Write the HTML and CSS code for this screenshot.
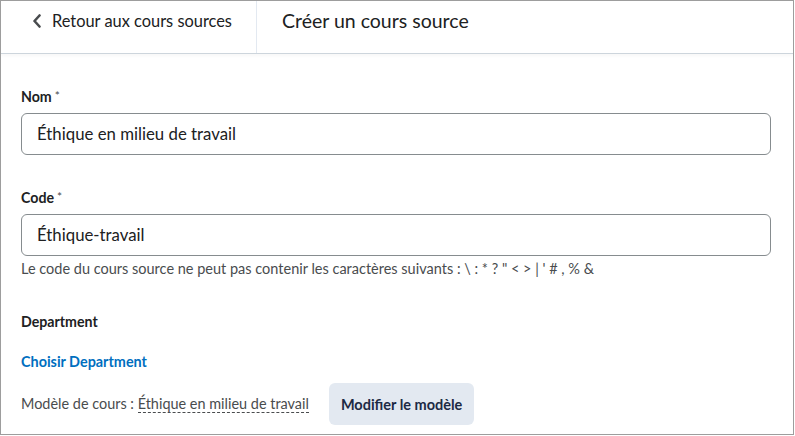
FILE: index.html
```html
<!DOCTYPE html>
<html lang="fr">
<head>
<meta charset="utf-8">
<title>Créer un cours source</title>
<link rel="stylesheet" href="styles.css">
</head>
<body>
<div class="frame">
  <header class="topbar">
    <a class="back" href="#">
      <svg class="chev" width="10" height="14" viewBox="0 0 10 14" aria-hidden="true"><path d="M7.5 1.5 L2.5 7 L7.5 12.5" fill="none" stroke="#494c4e" stroke-width="2.6" stroke-linecap="round" stroke-linejoin="round"/></svg>
      <span>Retour aux cours sources</span>
    </a>
    <h1 class="title">Créer un cours source</h1>
  </header>
  <main class="content">
    <div class="field">
      <label class="label">Nom<span class="req">*</span></label>
      <div class="input">Éthique en milieu de travail</div>
    </div>
    <div class="field field-help">
      <label class="label">Code<span class="req">*</span></label>
      <div class="input">Éthique-travail</div>
      <p class="help">Le code du cours source ne peut pas contenir les caractères suivants : \ : * ? " &lt; &gt; | ' # , % &amp;</p>
    </div>
    <div class="field field-dept">
      <div class="label">Department</div>
      <a class="link" href="#">Choisir Department</a>
    </div>
    <div class="template-row">
      <span class="template-text">Modèle de cours : <span class="dashed">Éthique en milieu de travail</span></span>
      <button class="btn" type="button">Modifier le modèle</button>
    </div>
  </main>
</div>
</body>
</html>
```

FILE: styles.css
```css
* { box-sizing: border-box; }
html, body { margin: 0; padding: 0; background: #fff; }
body {
  font-family: Lato, "Noto Sans", sans-serif;
  color: #202122;
}
.frame {
  width: 794px;
  height: 435px;
  border: 1px solid #9d9d9d;
  overflow: hidden;
  background: #fff;
}
.topbar {
  display: flex;
  height: 53px;
  border-bottom: 1px solid #cdd5dc;
  box-shadow: 0 2px 3px rgba(0, 0, 0, 0.03);
}
.back {
  display: flex;
  align-items: center;
  gap: 10px;
  width: 256px;
  height: 52px;
  padding: 0 0 12px 31px;
  border-right: 1px solid #e3e9f1;
  color: #202122;
  text-decoration: none;
  font-size: 16.4px;
  line-height: 24px;
}
.chev { display: block; flex: none; }
.title {
  margin: 0;
  padding: 5px 0 0 25px;
  font-size: 19.5px;
  font-weight: 400;
  line-height: 30px;
  color: #202122;
}
.content {
  padding: 32px 22px 0 20px;
}
.field { margin-bottom: 32px; }
.field-help { margin-bottom: 33px; }
.label {
  display: block;
  font-size: 14.2px;
  font-weight: 700;
  line-height: 20px;
  color: #202122;
  margin-bottom: 6px;
}
.req {
  font-weight: 400;
  font-size: 12px;
  color: #494c4e;
  margin-left: 3px;
  vertical-align: 2px;
}
.input {
  height: 42px;
  border: 1px solid #868c8f;
  border-radius: 6px;
  padding: 0 15px;
  font-size: 16.8px;
  line-height: 40px;
  color: #202122;
}
.help {
  margin: 3px 0 0;
  font-size: 14.5px;
  line-height: 20px;
  color: #494c4e;
}
.link {
  display: block;
  margin-top: 20px;
  color: #006fbf;
  font-size: 14.4px;
  font-weight: 700;
  line-height: 20px;
  text-decoration: none;
}
.field-dept { margin-bottom: 11px; }
.field-dept .label { margin-bottom: 0; }
.template-row {
  display: flex;
  align-items: center;
  gap: 20px;
}
.template-text {
  font-size: 14.45px;
  line-height: 20px;
  color: #494c4e;
}
.dashed {
  color: #494c4e;
  border-bottom: 1px dashed #494c4e;
}
.btn {
  height: 42px;
  padding: 0 12px;
  border: none;
  border-radius: 6px;
  background: #e3e9f1;
  font-family: Lato, "Noto Sans", sans-serif;
  font-size: 14.5px;
  font-weight: 700;
  color: #1c2a44;
}
```
